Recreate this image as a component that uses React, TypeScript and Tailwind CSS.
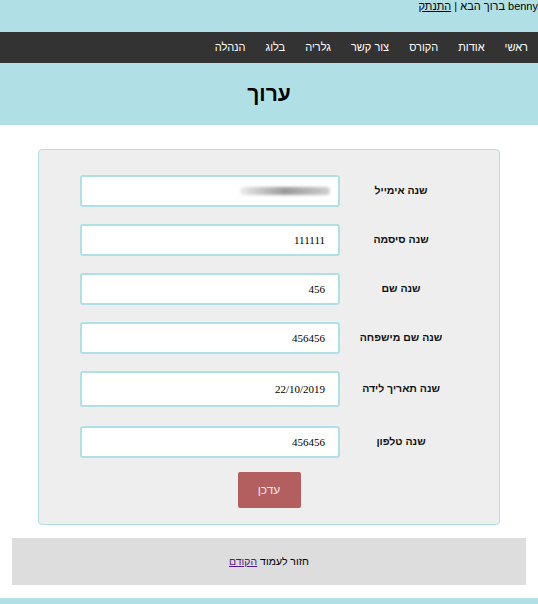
import React from 'react'

const navItems = ['ראשי', 'אודות', 'הקורס', 'צור קשר', 'גלריה', 'בלוג', 'הנהלה']

type Field = { label: string; value: string; blurred?: boolean; tall?: boolean }

const fields: Field[] = [
  { label: 'שנה אימייל', value: '', blurred: true },
  { label: 'שנה סיסמה', value: '111111' },
  { label: 'שנה שם', value: '456' },
  { label: 'שנה שם מישפחה', value: '456456' },
  { label: 'שנה תאריך לידה', value: '22/10/2019', tall: true },
  { label: 'שנה טלפון', value: '456456' },
]

const FieldRow: React.FC<{ field: Field }> = ({ field }) => {
  return (
    <div className={`flex items-center ${field.tall ? 'mb-[2px]' : ''}`}>
      <div
        className={`w-[260px] ${field.tall ? 'h-[36px]' : 'h-[32px]'} bg-white border-2 border-[#b0e0e6] rounded-[3px] flex items-center justify-end ${field.blurred ? 'pr-[8px]' : 'pr-[13px]'}`}
      >
        {field.blurred ? (
          <div className="w-[90px] h-[8px] rounded-full bg-gradient-to-r from-[#ececec] via-[#9a9a9a] to-[#cfcfcf] blur-[1.5px]" />
        ) : (
          <span className="font-['Liberation_Serif',serif] text-[11px] text-black">{field.value}</span>
        )}
      </div>
      <div className="w-[122px] text-center font-bold text-[10.5px] text-[#111]" dir="rtl">
        {field.label}
      </div>
    </div>
  )
}

const App: React.FC = () => {
  return (
    <div className="w-[538px] h-[604px] overflow-hidden bg-white font-['Liberation_Sans',Arial,sans-serif]">
      {/* top strip */}
      <div className="h-[32px] bg-[#b0e0e6] flex justify-end">
        <div dir="rtl" className="text-[11px] leading-[12px] text-black whitespace-nowrap">
          benny ברוך הבא | <span className="underline">התנתק</span>
        </div>
      </div>

      {/* nav */}
      <div dir="rtl" className="h-[31px] bg-[#333333] flex items-center">
        {navItems.map((item) => (
          <span key={item} className="px-[10px] text-[11px] text-white whitespace-nowrap">
            {item}
          </span>
        ))}
      </div>

      {/* header */}
      <div className="h-[62px] bg-[#b0e0e6] flex items-center justify-center">
        <h1 className="text-[21px] font-bold text-black">ערוך</h1>
      </div>

      {/* form */}
      <div className="pt-[24px] px-[38px]">
        <div className="h-[376px] bg-[#eeeeee] border border-[#b0e0e6] rounded-[4px] pt-[25px] flex flex-col items-center">
          <div className="flex flex-col gap-[17px] pl-[4px]">
            {fields.map((f) => (
              <FieldRow key={f.label} field={f} />
            ))}
          </div>
          <button className="mt-[14px] w-[63px] h-[36px] bg-[#b35f5f] rounded-[2px] text-[#f3e6e6] text-[12px]">
            עדכן
          </button>
        </div>
      </div>

      {/* footer */}
      <div className="mt-[13px] mx-[12px] h-[47px] bg-[#dddddd] flex items-center justify-center">
        <span dir="rtl" className="text-[10.5px] text-black">
          חזור לעמוד <a className="text-[#551a8b] underline">הקודם</a>
        </span>
      </div>

      <div className="mt-[13px] h-[20px] bg-[#b0e0e6]" />
    </div>
  )
}

export default App
